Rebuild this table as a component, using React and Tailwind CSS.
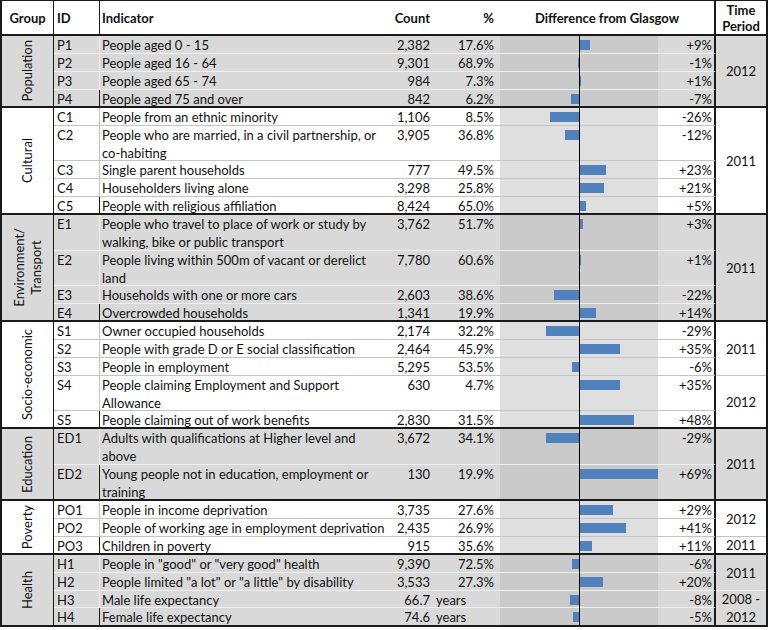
import React from "react";

const SCALE = 158 / 140;

const sections = [
  {
    name: ["Population"],
    gray: true,
    heights: [18, 18, 18, 16],
    rows: [
      { id: "P1", ind: ["People aged 0 - 15"], count: "2,382", pct: "17.6%", diff: 9 },
      { id: "P2", ind: ["People aged 16 - 64"], count: "9,301", pct: "68.9%", diff: -1 },
      { id: "P3", ind: ["People aged 65 - 74"], count: "984", pct: "7.3%", diff: 1 },
      { id: "P4", ind: ["People aged 75 and over"], count: "842", pct: "6.2%", diff: -7 },
    ],
    times: [{ label: ["2012"], from: 0, to: 4 }],
  },
  {
    name: ["Cultural"],
    gray: false,
    heights: [18, 35, 18, 18, 16],
    rows: [
      { id: "C1", ind: ["People from an ethnic minority"], count: "1,106", pct: "8.5%", diff: -26 },
      { id: "C2", ind: ["People who are married, in a civil partnership, or", "co-habiting"], count: "3,905", pct: "36.8%", diff: -12 },
      { id: "C3", ind: ["Single parent households"], count: "777", pct: "49.5%", diff: 23 },
      { id: "C4", ind: ["Householders living alone"], count: "3,298", pct: "25.8%", diff: 21 },
      { id: "C5", ind: ["People with religious affiliation"], count: "8,424", pct: "65.0%", diff: 5 },
    ],
    times: [{ label: ["2011"], from: 0, to: 5 }],
  },
  {
    name: ["Environment/", "Transport"],
    gray: true,
    heights: [36, 35, 18, 16],
    rows: [
      { id: "E1", ind: ["People who travel to place of work or study by", "walking, bike or public transport"], count: "3,762", pct: "51.7%", diff: 3 },
      { id: "E2", ind: ["People living within 500m of vacant or derelict", "land"], count: "7,780", pct: "60.6%", diff: 1 },
      { id: "E3", ind: ["Households with one or more cars"], count: "2,603", pct: "38.6%", diff: -22 },
      { id: "E4", ind: ["Overcrowded households"], count: "1,341", pct: "19.9%", diff: 14 },
    ],
    times: [{ label: ["2011"], from: 0, to: 4 }],
  },
  {
    name: ["Socio-economic"],
    gray: false,
    heights: [18, 18, 18, 35, 16],
    rows: [
      { id: "S1", ind: ["Owner occupied households"], count: "2,174", pct: "32.2%", diff: -29 },
      { id: "S2", ind: ["People with grade D or E social classification"], count: "2,464", pct: "45.9%", diff: 35 },
      { id: "S3", ind: ["People in employment"], count: "5,295", pct: "53.5%", diff: -6 },
      { id: "S4", ind: ["People claiming Employment and Support", "Allowance"], count: "630", pct: "4.7%", diff: 35 },
      { id: "S5", ind: ["People claiming out of work benefits"], count: "2,830", pct: "31.5%", diff: 48 },
    ],
    times: [
      { label: ["2011"], from: 0, to: 3 },
      { label: ["2012"], from: 3, to: 5 },
    ],
  },
  {
    name: ["Education"],
    gray: true,
    heights: [36, 34],
    rows: [
      { id: "ED1", ind: ["Adults with qualifications at Higher level and", "above"], count: "3,672", pct: "34.1%", diff: -29 },
      { id: "ED2", ind: ["Young people not in education, employment or", "training"], count: "130", pct: "19.9%", diff: 69 },
    ],
    times: [{ label: ["2011"], from: 0, to: 2 }],
  },
  {
    name: ["Poverty"],
    gray: false,
    heights: [18, 18, 16],
    rows: [
      { id: "PO1", ind: ["People in income deprivation"], count: "3,735", pct: "27.6%", diff: 29 },
      { id: "PO2", ind: ["People of working age in employment deprivation"], count: "2,435", pct: "26.9%", diff: 41 },
      { id: "PO3", ind: ["Children in poverty"], count: "915", pct: "35.6%", diff: 11 },
    ],
    times: [
      { label: ["2012"], from: 0, to: 2 },
      { label: ["2011"], from: 2, to: 3 },
    ],
  },
  {
    name: ["Health"],
    gray: true,
    heights: [18, 18, 17, 17],
    rows: [
      { id: "H1", ind: ['People in "good" or "very good" health'], count: "9,390", pct: "72.5%", diff: -6 },
      { id: "H2", ind: ['People limited "a lot" or "a little" by disability'], count: "3,533", pct: "27.3%", diff: 20 },
      { id: "H3", ind: ["Male life expectancy"], count: "66.7", years: true, diff: -8 },
      { id: "H4", ind: ["Female life expectancy"], count: "74.6", years: true, diff: -5 },
    ],
    times: [
      { label: ["2011"], from: 0, to: 2 },
      { label: ["2008 -", "2012"], from: 2, to: 4 },
    ],
  },
];

function Bar({ v }) {
  return (
    <div
      className="mt-[4px] h-[10px] bg-[#4f81bd]"
      style={{ width: `${Math.abs(v) * SCALE}px` }}
    />
  );
}

function Row({ r, h, last, gray }) {
  const sep = last ? "" : gray ? "border-b border-[#efefef]" : "border-b border-[#c4c4c4]";
  const band = gray ? "bg-[#cacaca]" : "bg-[#dfdfdf]";
  return (
    <div className="flex" style={{ height: `${h}px` }}>
      <div className={`w-[46px] shrink-0 border-r border-[#1a1a1a] pl-[3px] ${sep}`}>
        <div>{r.id}</div>
      </div>
      <div className={`w-[280px] shrink-0 pl-[2px] ${sep}`}>
        {r.ind.map((l, i) => (
          <div key={i} className="whitespace-nowrap">{l}</div>
        ))}
      </div>
      <div className={`w-[53px] shrink-0 pr-[3px] text-right ${sep}`}>{r.count}</div>
      {r.years ? (
        <div className={`w-[67px] shrink-0 pl-[3px] ${sep}`}>years</div>
      ) : (
        <div className={`w-[67px] shrink-0 pr-[6px] text-right ${sep}`}>{r.pct}</div>
      )}
      <div className={`flex w-[158px] shrink-0 ${band}`}>
        <div className={`flex w-[79px] items-start justify-end ${sep}`}>
          {r.diff < 0 && <Bar v={r.diff} />}
        </div>
        <div className="w-px bg-black" />
        <div className={`flex w-[78px] items-start ${sep}`}>
          {r.diff > 0 && <Bar v={r.diff} />}
        </div>
      </div>
      <div className={`w-[58px] shrink-0 border-r-2 border-r-[#1a1a1a] pr-[2px] text-right ${sep}`}>
        {r.diff > 0 ? `+${r.diff}%` : `${r.diff}%`}
      </div>
    </div>
  );
}

function Section({ s }) {
  const bg = s.gray ? "bg-[#d9d9d9]" : "bg-white";
  const sep = s.gray ? "border-b border-[#efefef]" : "border-b border-[#c4c4c4]";
  return (
    <div className={`flex border-b-2 border-[#1a1a1a] ${bg}`}>
      <div className="flex w-[52px] shrink-0 items-center justify-center border-r border-[#1a1a1a]">
        <div className="rotate-180 text-center text-[13px] leading-[17px] [writing-mode:vertical-rl]">
          {s.name.map((n, i) => (
            <div key={i}>{n}</div>
          ))}
        </div>
      </div>
      <div className="flex flex-col">
        {s.rows.map((r, i) => (
          <Row key={r.id} r={r} h={s.heights[i]} last={i === s.rows.length - 1} gray={s.gray} />
        ))}
      </div>
      <div className="flex w-[50px] shrink-0 flex-col">
        {s.times.map((t, i) => {
          const h = s.heights.slice(t.from, t.to).reduce((a, b) => a + b, 0);
          const isLast = i === s.times.length - 1;
          return (
            <div
              key={i}
              className={`flex flex-col items-center justify-center text-center ${isLast ? "" : sep}`}
              style={{ height: `${h}px` }}
            >
              {t.label.map((l, j) => (
                <div key={j}>{l}</div>
              ))}
            </div>
          );
        })}
      </div>
    </div>
  );
}

export default function App() {
  return (
    <div className="h-[630px] w-[768px] overflow-hidden bg-white font-[Lato,sans-serif] text-[13px] leading-[18px] text-[#111]">
      <div className="w-[768px] border-x-2 border-t border-[#1a1a1a]">
        <div className="flex h-[35px] border-b-2 border-[#1a1a1a] font-bold">
          <div className="flex w-[52px] shrink-0 items-center justify-center border-r border-[#1a1a1a]">Group</div>
          <div className="flex w-[46px] shrink-0 items-center border-r border-[#1a1a1a] pl-[3px]">ID</div>
          <div className="flex w-[280px] shrink-0 items-center pl-[2px]">Indicator</div>
          <div className="flex w-[53px] shrink-0 items-center justify-end pr-[3px]">Count</div>
          <div className="flex w-[67px] shrink-0 items-center justify-end pr-[6px]">%</div>
          <div className="flex w-[216px] shrink-0 items-center justify-center border-r-2 border-[#1a1a1a]">Difference from Glasgow</div>
          <div className="flex w-[50px] shrink-0 flex-col items-center justify-center leading-[16px]">
            <div>Time</div>
            <div>Period</div>
          </div>
        </div>
        {sections.map((s, i) => (
          <Section key={i} s={s} />
        ))}
      </div>
    </div>
  );
}
